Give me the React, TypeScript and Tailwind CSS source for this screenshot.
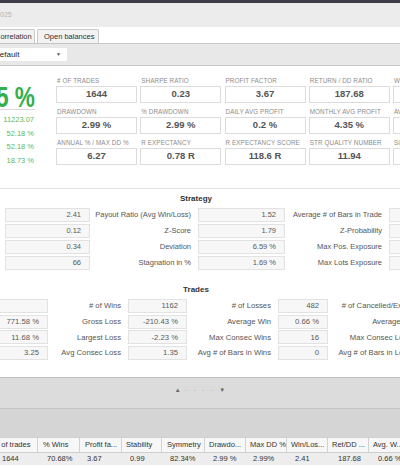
import React from 'react'

const metricRows = [
  [
    ['# OF TRADES', '1644'],
    ['SHARPE RATIO', '0.23'],
    ['PROFIT FACTOR', '3.67'],
    ['RETURN / DD RATIO', '187.68'],
    ['WINNING PERCENTAGE', '70.68 %'],
  ],
  [
    ['DRAWDOWN', '2.99 %'],
    ['% DRAWDOWN', '2.99 %'],
    ['DAILY AVG PROFIT', '0.2 %'],
    ['MONTHLY AVG PROFIT', '4.35 %'],
    ['AVG WIN', '0.66 %'],
  ],
  [
    ['ANNUAL % / MAX DD %', '6.27'],
    ['R EXPECTANCY', '0.78 R'],
    ['R EXPECTANCY SCORE', '118.6 R'],
    ['STR QUALITY NUMBER', '11.94'],
    ['SQN SCORE', '3.1'],
  ],
]

const strategyRows = [
  ['2.41', 'Payout Ratio (Avg Win/Loss)', '1.52', 'Average # of Bars in Trade', ''],
  ['0.12', 'Z-Score', '1.79', 'Z-Probability', ''],
  ['0.34', 'Deviation', '6.59 %', 'Max Pos. Exposure', ''],
  ['66', 'Stagnation in %', '1.69 %', 'Max Lots Exposure', ''],
]

const tradeRows = [
  ['', '# of Wins', '1162', '# of Losses', '482', '# of Cancelled/Expired'],
  ['771.58 %', 'Gross Loss', '-210.43 %', 'Average Win', '0.66 %', 'Average Loss'],
  ['11.68 %', 'Largest Loss', '-2.23 %', 'Max Consec Wins', '16', 'Max Consec Losses'],
  ['3.25', 'Avg Consec Loss', '1.35', 'Avg # of Bars in Wins', '0', 'Avg # of Bars in Losses'],
]

const tableCols = [
  { head: '# of trades', value: '1644', w: 'w-[46px]', hp: 'pl-[3px]', dp: 'pl-[10px]' },
  { head: '% Wins', value: '70.68%', w: 'w-[42px]', hp: 'pl-[5px]', dp: 'pl-[9px]' },
  { head: 'Profit fa...', value: '3.67', w: 'w-[42px]', hp: 'pl-[5px]', dp: 'pl-[7px]' },
  { head: 'Stability', value: '0.99', w: 'w-[40px]', hp: 'pl-[4px]', dp: 'pl-[8px]' },
  { head: 'Symmetry', value: '82.34%', w: 'w-[43px]', hp: 'pl-[5px]', dp: 'pl-[8px]' },
  { head: 'Drawdo...', value: '2.99 %', w: 'w-[41px]', hp: 'pl-[4px]', dp: 'pl-[8px]' },
  { head: 'Max DD %', value: '2.99%', w: 'w-[41px]', hp: 'pl-[4px]', dp: 'pl-[7px]' },
  { head: 'Win/Los...', value: '2.41', w: 'w-[41px]', hp: 'pl-[4px]', dp: 'pl-[8px]' },
  { head: 'Ret/DD ...', value: '187.68', w: 'w-[41px]', hp: 'pl-[4px]', dp: 'pl-[10px]' },
  { head: 'Avg. W...', value: '0.66 %', w: 'w-[41px]', hp: 'pl-[4px]', dp: 'pl-[9px]' },
]

function ValueBox({ v }: { v: string }) {
  return (
    <div className="h-[14px] border border-[#e2e2e2] bg-[#f7f7f7] flex items-center justify-end pr-[8px] text-[#5a5a5a] whitespace-nowrap">
      {v}
    </div>
  )
}

function Label({ t }: { t: string }) {
  return (
    <div className="h-[14px] flex items-center justify-end pr-[7px] text-[#555] whitespace-nowrap overflow-visible">
      {t}
    </div>
  )
}

export default function App() {
  return (
    <div className="w-[400px] h-[470px] overflow-hidden bg-white font-['Liberation_Sans',Arial,sans-serif] flex flex-col">
      {/* window top */}
      <div className="h-[3px] shrink-0 bg-[#3e3e48]" />
      <div className="h-[24px] shrink-0 bg-[#ececec] flex items-center text-[7px] text-[#b4b4b4]">025</div>

      {/* tabs */}
      <div className="h-[16px] shrink-0 flex items-end gap-[2px] bg-white">
        <div className="h-[14px] w-[43px] -ml-[8px] pl-[2px] flex items-center border border-b-0 border-[#cacaca] bg-[#f2f2f2] rounded-t-[2px] text-[7.5px] text-[#333] whitespace-nowrap">
          Correlation
        </div>
        <div className="h-[14px] w-[62px] pl-[6px] flex items-center border border-b-0 border-[#cacaca] bg-[#f2f2f2] rounded-t-[2px] text-[7.5px] text-[#333] whitespace-nowrap">
          Open balances
        </div>
      </div>

      {/* toolbar */}
      <div className="h-[23px] shrink-0 border-t border-b border-[#c6c6c6] bg-[#e8e8e8] flex items-center">
        <div className="h-[13px] w-[67px] bg-white flex items-center justify-between pr-[6px] overflow-hidden">
          <span className="-ml-[6px] text-[8px] text-[#222]">Default</span>
          <span className="text-[5px] text-[#555]">▼</span>
        </div>
      </div>

      {/* key metrics */}
      <div className="h-[123px] shrink-0 border-b border-[#e3e3e3] flex pt-[10px]">
        <div className="w-[35px] shrink-0 flex flex-col items-stretch">
          <div className="mt-[8px] h-[26px] leading-[26px] border-b border-[#d8d8d8] flex justify-end overflow-visible">
            <span className="text-[29px] font-bold text-[#34b04a] whitespace-nowrap scale-x-[0.78] origin-right inline-block">
              5 %
            </span>
          </div>
          <div className="mt-[3px] flex flex-col items-end pr-[1px] text-[7.5px] leading-[13.5px] text-[#5cb85c]">
            <span>11223.07</span>
            <span>52.18 %</span>
            <span>52.18 %</span>
            <span>18.73 %</span>
          </div>
        </div>
        <div className="ml-[21px] grid grid-cols-[repeat(5,81px)] gap-x-[3.25px] gap-y-[4px] h-fit">
          {metricRows.flat().map(([label, value]) => (
            <div key={label} className="flex flex-col">
              <div className="h-[10px] leading-[10px] pl-[1px] text-[6.3px] text-[#8c8c8c] tracking-[0.1px] whitespace-nowrap">
                {label}
              </div>
              <div className="h-[17px] border border-[#dcdcdc] bg-white flex items-center justify-center text-[9.5px] font-bold text-[#555] whitespace-nowrap">
                {value}
              </div>
            </div>
          ))}
        </div>
      </div>

      {/* strategy */}
      <div className="shrink-0 flex flex-col">
        <div className="w-[392px] pt-[5px] h-[15px] leading-[10px] text-center text-[8px] font-bold text-[#333]">Strategy</div>
        <div className="mt-[4px] pl-[5px] grid grid-cols-[85px_108px_87px_104px_87px] gap-y-[2px] text-[7.5px]">
          {strategyRows.map((r, i) => (
            <React.Fragment key={i}>
              <ValueBox v={r[0]} />
              <Label t={r[1]} />
              <ValueBox v={r[2]} />
              <Label t={r[3]} />
              <ValueBox v={r[4]} />
            </React.Fragment>
          ))}
        </div>
      </div>

      {/* trades */}
      <div className="shrink-0 flex flex-col mt-[15px]">
        <div className="w-[392px] h-[10px] leading-[10px] text-center text-[8px] font-bold text-[#333]">Trades</div>
        <div className="mt-[4px] -ml-[1px] grid grid-cols-[49px_80px_59px_91px_50px_98px] gap-y-[1.67px] text-[7.7px]">
          {tradeRows.map((r, i) => (
            <React.Fragment key={i}>
              <ValueBox v={r[0]} />
              <Label t={r[1]} />
              <ValueBox v={r[2]} />
              <Label t={r[3]} />
              <ValueBox v={r[4]} />
              <Label t={r[5]} />
            </React.Fragment>
          ))}
        </div>
      </div>

      {/* bottom results table */}
      <div className="mt-auto h-[93px] shrink-0 flex flex-col border-t border-[#bdbdbd] bg-[#d5d5d5]">
        <div className="h-[31px] shrink-0 border-b border-[#c4c4c4] bg-[#dcdcdc] flex justify-center items-start pt-[8px] text-[6px] leading-[8px]">
          <span className="text-[#666]">▲</span>
          <span className="ml-[4px] mr-[4px] text-[#a9a9a9] tracking-[2.5px]">- - - -</span>
          <span className="text-[#666]">▼</span>
        </div>
        <div className="h-[28px] shrink-0" />
        <div className="h-[16px] shrink-0 flex -ml-[8px] bg-[#f7f7f7] border-t border-b border-[#cfcfcf]">
          {tableCols.map((c) => (
            <div key={c.head} className={`${c.w} ${c.hp} shrink-0 border-r border-[#d2d2d2] flex items-center text-[7.5px] text-[#333] whitespace-nowrap overflow-hidden`}>
              {c.head}
            </div>
          ))}
        </div>
        <div className="h-[12px] shrink-0 flex -ml-[8px] bg-[#ededed]">
          {tableCols.map((c) => (
            <div key={c.head} className={`${c.w} ${c.dp} shrink-0 flex items-center text-[7.5px] text-[#333] whitespace-nowrap overflow-hidden`}>
              {c.value}
            </div>
          ))}
        </div>
        <div className="flex-1 bg-white" />
      </div>
    </div>
  )
}
